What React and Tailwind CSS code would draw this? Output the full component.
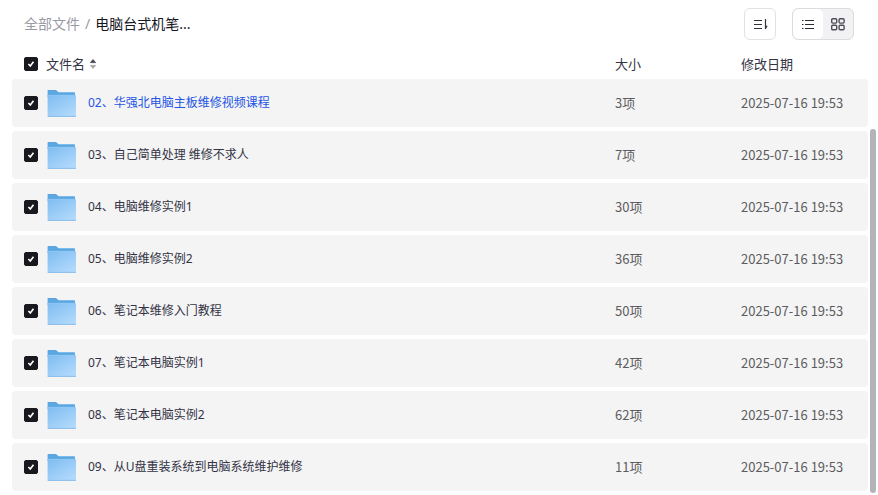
import { useState } from "react";

const FILES = [
  { id: "02", name: "02、华强北电脑主板维修视频课程", size: "3项", date: "2025-07-16 19:53" },
  { id: "03", name: "03、自己简单处理 维修不求人", size: "7项", date: "2025-07-16 19:53" },
  { id: "04", name: "04、电脑维修实例1", size: "30项", date: "2025-07-16 19:53" },
  { id: "05", name: "05、电脑维修实例2", size: "36项", date: "2025-07-16 19:53" },
  { id: "06", name: "06、笔记本维修入门教程", size: "50项", date: "2025-07-16 19:53" },
  { id: "07", name: "07、笔记本电脑实例1", size: "42项", date: "2025-07-16 19:53" },
  { id: "08", name: "08、笔记本电脑实例2", size: "62项", date: "2025-07-16 19:53" },
  { id: "09", name: "09、从U盘重装系统到电脑系统维护维修", size: "11项", date: "2025-07-16 19:53" },
];

function Checkbox({ label, checked, onChange }) {
  return (
    <span className="grid h-[14px] w-[14px] flex-shrink-0">
      <input
        type="checkbox"
        aria-label={label}
        checked={checked}
        onChange={onChange}
        className="col-start-1 row-start-1 h-[14px] w-[14px] appearance-none rounded-[2px] border border-[#18181f] bg-white checked:bg-[#18181f]"
      />
      {checked && (
        <svg viewBox="0 0 14 14" className="pointer-events-none col-start-1 row-start-1 h-[14px] w-[14px]" fill="none" stroke="#fff" strokeWidth="1.6">
          <path d="M4.4 7l1.9 2 3.2-4.3" />
        </svg>
      )}
    </span>
  );
}

function FolderIcon() {
  return (
    <svg viewBox="0 0 30 28" className="h-7 w-[30px] flex-shrink-0" aria-hidden="true">
      <defs>
        <linearGradient id="folder-front" x1="0" y1="0" x2="0.7" y2="1">
          <stop offset="0" stopColor="#7ebcf0" />
          <stop offset="1" stopColor="#b0d9fc" />
        </linearGradient>
      </defs>
      <path d="M.6 1.6Q.6 1 1.2 1H9l2.6 2.2h15.6q.8 0 .8.9V8H.6z" fill="#5ba7e2" />
      <path d="M.6 6h27.6q.8 0 .8.8v20.4q0 .6-.6.6H1.2q-.6 0-.6-.6z" fill="url(#folder-front)" />
      <path d="M.8 27.4h28" stroke="#7cb6e6" strokeWidth="0.8" />
      <path d="M1 6.3h27" stroke="#92caf5" strokeWidth="0.7" />
    </svg>
  );
}

function SortIcon() {
  return (
    <svg viewBox="0 0 16 16" className="h-4 w-4" fill="none" stroke="#33333b" strokeWidth="1.2">
      <path d="M2 4.5h8M2 8.5h8M2 12.5h8M13.5 3v10" />
      <path d="M13.5 13.6V9.8l2.2 0z" fill="#33333b" stroke="none" />
    </svg>
  );
}

function ListIcon() {
  return (
    <svg viewBox="0 0 16 16" className="h-4 w-4" fill="none" stroke="#2b2b33" strokeWidth="1.2">
      <path d="M2 4.5h1.5M5 4.5h9M2 8.5h1.5M5 8.5h9M2 12.5h1.5M5 12.5h9" />
    </svg>
  );
}

function GridIcon() {
  return (
    <svg viewBox="0 0 16 16" className="h-4 w-4" fill="none" stroke="#4e4e58" strokeWidth="1.4">
      <rect x="1.7" y="2.7" width="5" height="4.4" rx="1" />
      <rect x="9.1" y="2.7" width="5" height="4.4" rx="1" />
      <rect x="1.7" y="9.3" width="5" height="4.4" rx="1" />
      <rect x="9.1" y="9.3" width="5" height="4.4" rx="1" />
    </svg>
  );
}

export default function App() {
  const [selected, setSelected] = useState(FILES.map((f) => f.id));
  const allSelected = selected.length === FILES.length;

  const toggle = (id) =>
    setSelected((prev) => (prev.includes(id) ? prev.filter((x) => x !== id) : [...prev, id]));

  return (
    <div className="flex bg-white pl-3 font-['Noto_Sans','Noto_Sans_CJK_SC',sans-serif] text-[#333345]">
      <main className="min-w-0 flex-1">
        {/* Breadcrumb + view controls */}
        <header className="flex h-12 items-center justify-between pr-[14px] pl-3">
          <nav className="flex items-center gap-[5px] text-sm">
            <a href="#all" className="text-[#9a9aa5]">全部文件</a>
            <span className="text-[#9a9aa5]">/</span>
            <span className="text-[#15151f]">电脑台式机笔...</span>
          </nav>
          <div className="flex gap-4">
            <button aria-label="排序" className="flex h-8 w-8 items-center justify-center rounded-md border border-[#e2e2e5]">
              <SortIcon />
            </button>
            <div className="flex h-8 w-[62px] overflow-hidden rounded-md border border-[#dcdce0] bg-[#f2f2f4]">
              <button aria-label="列表" className="flex flex-1 items-center justify-center rounded-md bg-white">
                <ListIcon />
              </button>
              <button aria-label="网格" className="flex flex-1 items-center justify-center">
                <GridIcon />
              </button>
            </div>
          </div>
        </header>

        {/* File list */}
        <table className="w-full table-fixed border-separate border-spacing-x-0 border-spacing-y-1 text-left">
          <thead className="text-[13px] leading-5">
            <tr className="h-[23px]">
              <th className="p-0 pl-3 font-normal">
                <div className="flex items-center">
                  <Checkbox
                    label="全选"
                    checked={allSelected}
                    onChange={() => setSelected(allSelected ? [] : FILES.map((f) => f.id))}
                  />
                  <span className="ml-2">文件名</span>
                  <svg viewBox="0 0 8 12" className="ml-1 h-3 w-2" strokeLinejoin="round" strokeWidth="0.8" aria-hidden="true">
                    <path d="M4 1.6L6.6 4.6H1.4z" fill="#45454f" stroke="#45454f" />
                    <path d="M4 10.4L6.6 7.4H1.4z" fill="#a5a5a8" stroke="#a5a5a8" />
                  </svg>
                </div>
              </th>
              <th className="w-[126px] p-0 font-normal">大小</th>
              <th className="w-[127px] p-0 font-normal">修改日期</th>
            </tr>
          </thead>
          <tbody>
            {FILES.map((file, i) => (
              <tr key={file.id} className="h-12">
                <td className="rounded-l bg-[#f4f4f4] p-0 pl-3">
                  <div className="flex items-center">
                    <Checkbox
                      label={file.name}
                      checked={selected.includes(file.id)}
                      onChange={() => toggle(file.id)}
                    />
                    <span className="ml-[9px] flex">
                      <FolderIcon />
                    </span>
                    <a href={`#${file.id}`} className={`ml-[11px] truncate text-xs leading-5 ${i === 0 ? "text-[#2455e6]" : ""}`}>
                      {file.name}
                    </a>
                  </div>
                </td>
                <td className="bg-[#f4f4f4] p-0 font-['Noto_Sans_CJK_SC',sans-serif] text-[13px] leading-5 text-[#5c5c60]">
                  {file.size}
                </td>
                <td className="rounded-r bg-[#f4f4f4] p-0 font-['Noto_Sans_CJK_SC',sans-serif] text-[13px] leading-5 text-[#5c5c60]">
                  {file.date}
                </td>
              </tr>
            ))}
          </tbody>
        </table>
      </main>

      {/* Scrollbar */}
      <div className="flex w-[10px] flex-shrink-0 flex-col items-center pt-[129px] pb-[2px]">
        <div className="w-[6px] flex-1 rounded-full bg-[#b3b3ba]" />
      </div>
    </div>
  );
}
